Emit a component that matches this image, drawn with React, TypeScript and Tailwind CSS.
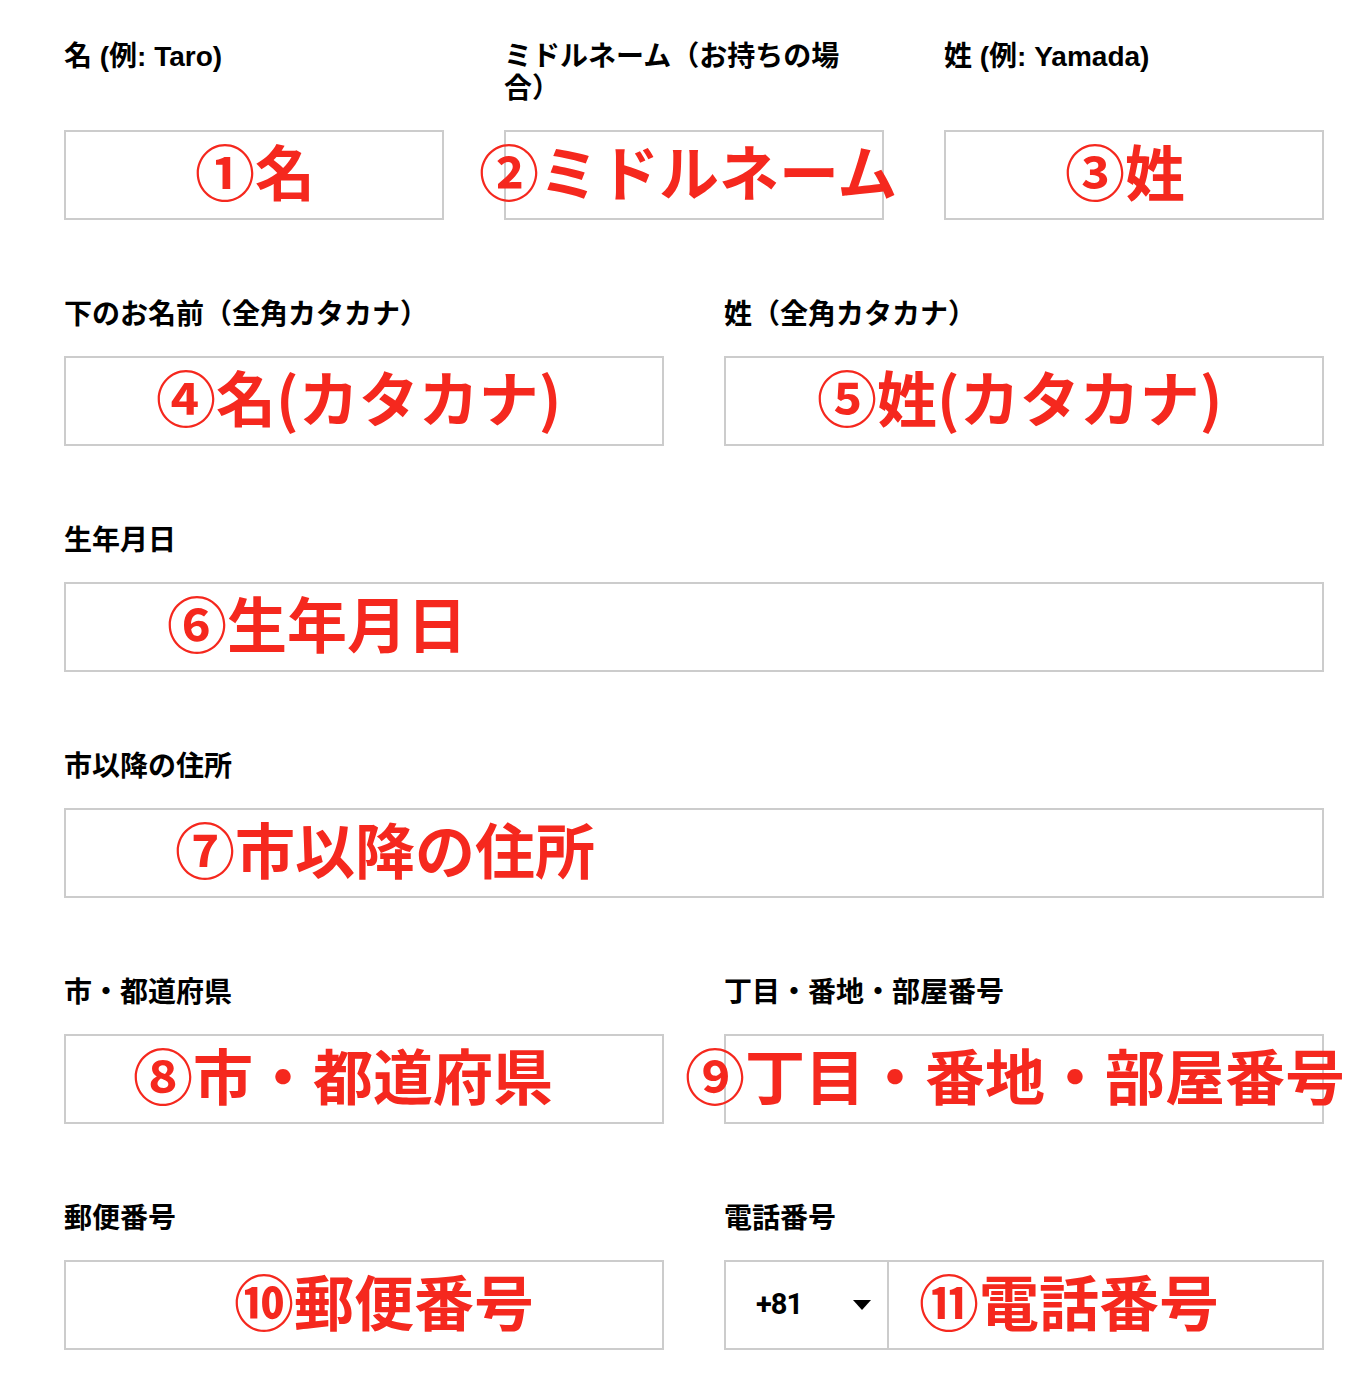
import React from "react";

const labelCls =
  "text-[28px] leading-[32px] font-bold text-black [font-family:'Liberation_Sans','Noto_Sans_CJK_JP',sans-serif]";
const redCls =
  "absolute top-0 bottom-[10px] flex items-center whitespace-nowrap text-[60px] leading-none font-bold text-[#f5281e] [font-family:'Noto_Sans_CJK_JP',sans-serif] pointer-events-none";

function Field({
  label,
  note,
  left,
  labelExtra = "",
}: {
  label: string;
  note: string;
  left: string;
  labelExtra?: string;
}) {
  return (
    <div className="flex flex-col">
      <div className={`${labelCls} ${labelExtra}`}>{label}</div>
      <div className="mt-auto pt-[25px]">
        <div className="relative h-[90px] border-2 border-[#cccccc] bg-white">
          <span className={`${redCls} ${left}`}>{note}</span>
        </div>
      </div>
    </div>
  );
}

export default function App() {
  return (
    <div className="h-[1378px] w-full overflow-hidden bg-white">
      <div className="w-[1366px] pl-[64px] pr-[42px] pt-[41px]">
        <div className="grid grid-cols-3 gap-x-[60px]">
          <Field label="名 (例: Taro)" note="①名" left="left-[129px]" />
          <Field
            label="ミドルネーム（お持ちの場合）"
            note="②ミドルネーム"
            left="left-[-27px]"
            labelExtra="max-w-[345px]"
          />
          <Field label="姓 (例: Yamada)" note="③姓" left="left-[119px]" />
        </div>

        <div className="mt-[79px] grid grid-cols-2 gap-x-[60px]">
          <Field
            label="下のお名前（全角カタカナ）"
            note="④名(カタカナ)"
            left="left-[90px]"
          />
          <Field
            label="姓（全角カタカナ）"
            note="⑤姓(カタカナ)"
            left="left-[91px]"
          />
        </div>

        <div className="mt-[79px]">
          <Field label="生年月日" note="⑥生年月日" left="left-[101px]" />
        </div>

        <div className="mt-[79px]">
          <Field label="市以降の住所" note="⑦市以降の住所" left="left-[109px]" />
        </div>

        <div className="mt-[79px] grid grid-cols-2 gap-x-[60px]">
          <Field label="市・都道府県" note="⑧市・都道府県" left="left-[67px]" />
          <Field
            label="丁目・番地・部屋番号"
            note="⑨丁目・番地・部屋番号"
            left="left-[-41px]"
          />
        </div>

        <div className="mt-[79px] grid grid-cols-2 gap-x-[60px]">
          <Field label="郵便番号" note="⑩郵便番号" left="left-[168px]" />
          <div className="flex flex-col">
            <div className={labelCls}>電話番号</div>
            <div className="mt-auto pt-[25px]">
              <div className="relative flex h-[90px] border-2 border-[#cccccc] bg-white">
                <div className="flex w-[163px] shrink-0 items-center border-r-2 border-[#cccccc] pl-[30px] pr-[16px]">
                  <span className="text-[29px] font-bold tracking-[-1px] text-black [font-family:'Roboto',sans-serif]">
                    +81
                  </span>
                  <svg
                    className="ml-auto"
                    width="18"
                    height="10"
                    viewBox="0 0 18 10"
                  >
                    <polygon points="0,0 18,0 9,10" fill="#000" />
                  </svg>
                </div>
                <div className="flex-1" />
                <span className={`${redCls} left-[193px]`}>⑪電話番号</span>
              </div>
            </div>
          </div>
        </div>
      </div>
    </div>
  );
}
